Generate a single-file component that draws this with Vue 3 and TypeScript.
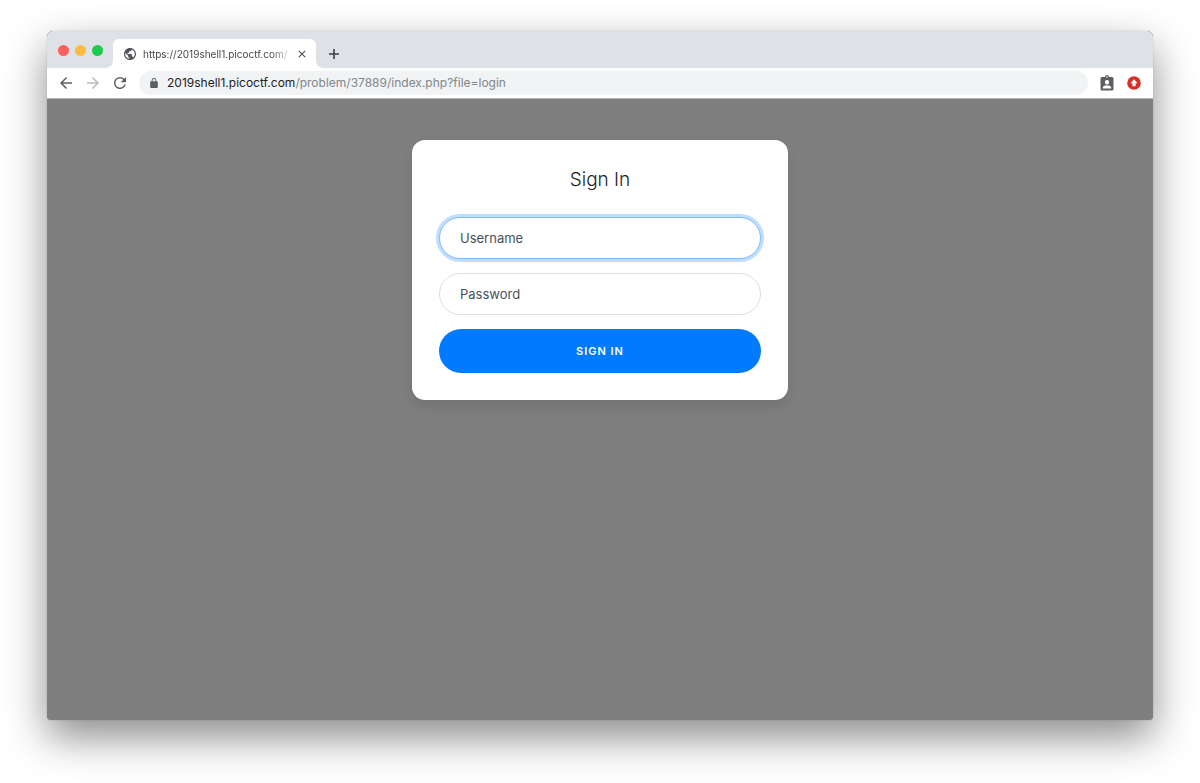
<script setup lang="ts">
import { ref } from 'vue'

type Field = { id: string; label: string; type: string; active: boolean }

const host = '2019shell1.picoctf.com'
const path = '/problem/37889/index.php?file=login'
const lights: string[] = ['close', 'minimize', 'maximize']
const fields: Field[] = [
  { id: 'username', label: 'Username', type: 'text', active: true },
  { id: 'password', label: 'Password', type: 'password', active: false },
]
const values = ref<Record<string, string>>({ username: '', password: '' })
</script>

<template>
  <div class="desktop">
    <div class="window">
      <header class="tabstrip">
        <div class="lights">
          <button v-for="l in lights" :key="l" class="light" :class="l" :aria-label="l"></button>
        </div>
        <div class="tab">
          <svg class="globe" viewBox="2 2 20 20" aria-hidden="true">
            <path d="M12 2C6.480 2 2 6.480 2 12s4.480 10 10 10 10-4.480 10-10S17.520 2 12 2zm-1 17.930c-3.950-.49-7-3.850-7-7.930 0-.62.08-1.210.21-1.790L9 15v1c0 1.100.9 2 2 2v1.930zm6.900-2.540c-.26-.81-1-1.390-1.900-1.390h-1v-3c0-.55-.45-1-1-1H8v-2h2c.55 0 1-.45 1-1V7h2c1.100 0 2-.9 2-2v-.41c2.930 1.190 5 4.060 5 7.410 0 2.080-.8 3.970-2.100 5.390z" fill="#50555b" />
          </svg>
          <span class="tab-title">https://{{ host }}/</span>
          <button class="tab-close" aria-label="Close tab">
            <svg viewBox="0 0 8 8"><path d="M.8.8l6.400 6.400M7.200.8L.8 7.200" /></svg>
          </button>
        </div>
        <button class="new-tab" aria-label="New tab">
          <svg viewBox="0 0 12 12"><path d="M6 1v10M1 6h10" /></svg>
        </button>
      </header>

      <nav class="toolbar">
        <button class="nav-btn" aria-label="Back">
          <svg viewBox="4 4 16 16"><path d="M20 11H7.830l5.590-5.590L12 4l-8 8 8 8 1.410-1.410L7.830 13H20z" fill="#5b5f64" /></svg>
        </button>
        <button class="nav-btn" aria-label="Forward">
          <svg viewBox="4 4 16 16"><path d="M12 4l-1.410 1.410L16.170 11H4v2h12.170l-5.580 5.590L12 20l8-8z" fill="#b9bbbe" /></svg>
        </button>
        <button class="nav-btn reload" aria-label="Reload">
          <svg viewBox="4 4 16 16"><path d="M17.650 6.350A7.960 7.960 0 0 0 12 4a8 8 0 1 0 7.730 10h-2.080A6 6 0 1 1 12 6c1.660 0 3.140.69 4.220 1.780L13 11h7V4z" fill="#5b5f64" /></svg>
        </button>
        <a class="omnibox" href="#">
          <svg class="lock" viewBox="4 1 16 21" aria-hidden="true">
            <path d="M18 8h-1V6A5 5 0 0 0 7 6v2H6a2 2 0 0 0-2 2v10a2 2 0 0 0 2 2h12a2 2 0 0 0 2-2V10a2 2 0 0 0-2-2zM8.900 8V6a3.100 3.100 0 0 1 6.200 0v2z" fill="#5b5f64" />
          </svg>
          <span class="url"><span class="host">{{ host }}</span>{{ path }}</span>
        </a>
        <button class="ext" aria-label="Profile badge">
          <svg class="badge" viewBox="0 0 14 16">
            <path fill-rule="evenodd" d="M2 2h3a2 2 0 0 1 4 0h3a1.500 1.500 0 0 1 1.500 1.500v10.500a1.500 1.500 0 0 1-1.500 1.500H2A1.500 1.500 0 0 1 .5 14V3.500A1.500 1.500 0 0 1 2 2zM7 1.200a.8.8 0 1 0 0 1.600.8.8 0 0 0 0-1.600zM7 5a2.200 2.200 0 1 0 0 4.400A2.200 2.200 0 0 0 7 5zM2.800 13.500h8.400v-1c0-1.400-2.800-2.200-4.200-2.200s-4.200.8-4.200 2.200z" fill="#5b5f64" />
          </svg>
        </button>
        <button class="ext" aria-label="Update">
          <svg class="update" viewBox="0 0 14 14">
            <circle cx="7" cy="7" r="6.800" fill="#d93025" />
            <path d="M7 3.300l3.500 3.900H8.600v3H5.400v-3H3.500z" fill="#fff" />
          </svg>
        </button>
      </nav>

      <main class="page">
        <form class="card" @submit.prevent>
          <h1 class="title">Sign In</h1>
          <div v-for="f in fields" :key="f.id" class="group">
            <input :id="f.id" v-model="values[f.id]" class="field" :class="{ active: f.active }" :type="f.type" />
            <label v-show="!values[f.id]" :for="f.id">{{ f.label }}</label>
          </div>
          <button class="submit" type="submit">Sign in</button>
        </form>
      </main>
    </div>
  </div>
</template>

<style>
body {
  background: #fff;
}
</style>

<style scoped>
.desktop {
  box-sizing: border-box;
  min-height: 100vh;
  padding: 31px 47px 63px;
  display: flex;
  overflow: hidden;
  font-family: Inter, "Liberation Sans", sans-serif;
}
button {
  border: 0;
  padding: 0;
  background: none;
  font-family: inherit;
}
svg {
  display: block;
}
.window {
  flex: 1;
  min-width: 0;
  display: flex;
  flex-direction: column;
  border-radius: 6px 6px 4px 4px;
  background: #7f7f7f;
  box-shadow: 0 0 1px rgba(0, 0, 0, 0.4), 0 17px 42px rgba(0, 0, 0, 0.46);
}
.tabstrip {
  height: 37px;
  display: flex;
  align-items: flex-end;
  background: #dee1e6;
  border-radius: 6px 6px 0 0;
}
.lights {
  display: flex;
  gap: 6px;
  padding: 0 10px 12px 11px;
}
.light {
  width: 11px;
  height: 11px;
  border-radius: 50%;
}
.close {
  background: #fc605c;
}
.minimize {
  background: #fdbc40;
}
.maximize {
  background: #1fca4f;
}
.tab {
  position: relative;
  box-sizing: border-box;
  width: 203px;
  height: 29px;
  padding: 0 10px 0 11px;
  display: flex;
  align-items: center;
  background: #fff;
  border-radius: 6px 6px 0 0;
}
.tab::before,
.tab::after {
  content: "";
  position: absolute;
  bottom: 0;
  width: 6px;
  height: 6px;
}
.tab::before {
  left: -6px;
  background: radial-gradient(circle at 0 0, transparent 5px, #fff 6px);
}
.tab::after {
  right: -6px;
  background: radial-gradient(circle at 100% 0, transparent 5px, #fff 6px);
}
.globe {
  width: 12px;
  height: 12px;
  margin-right: 7px;
  flex: none;
}
.tab-title {
  flex: 1;
  min-width: 0;
  white-space: nowrap;
  font-size: 10px;
  line-height: 16px;
  color: #45494d;
  mask-image: linear-gradient(to right, #000 128px, transparent 150px);
}
.tab-close {
  margin-left: 4px;
  flex: none;
}
.tab-close svg {
  width: 8px;
  height: 8px;
  fill: none;
  stroke: #50555b;
  stroke-width: 1.2;
}
.new-tab {
  margin: 0 0 8px 12px;
}
.new-tab svg {
  width: 12px;
  height: 12px;
  fill: none;
  stroke: #3c4043;
  stroke-width: 1.6;
}
.toolbar {
  height: 31px;
  box-sizing: border-box;
  display: flex;
  align-items: center;
  padding: 0 12px 0 13px;
  background: #fff;
  border-bottom: 1px solid #b5b5b5;
}
.nav-btn {
  width: 12px;
  margin-right: 15px;
  flex: none;
}
.nav-btn svg {
  width: 12px;
  height: 12px;
}
.reload {
  margin-right: 13px;
}
.omnibox {
  flex: 1;
  min-width: 0;
  height: 24px;
  margin-right: 12px;
  padding-left: 11px;
  display: flex;
  align-items: center;
  gap: 9px;
  background: #f1f3f4;
  border-radius: 12px;
  text-decoration: none;
}
.lock {
  width: 8px;
  height: 10px;
}
.url {
  font-size: 12px;
  line-height: 16px;
  color: #80868b;
  white-space: nowrap;
}
.host {
  color: #202124;
}
.ext {
  width: 14px;
  margin-right: 13px;
  flex: none;
}
.ext:last-child {
  margin-right: 0;
}
.badge {
  width: 14px;
  height: 16px;
}
.update {
  width: 14px;
  height: 14px;
}
.page {
  flex: 1;
  padding: 41px 20px;
}
.card {
  box-sizing: border-box;
  max-width: 376px;
  margin: 0 auto;
  padding: 27px;
  background: #fff;
  border-radius: 13px;
  box-shadow: 0 7px 14px rgba(0, 0, 0, 0.1);
}
.title {
  margin: 0 0 25px;
  font-size: 19px;
  line-height: 25px;
  font-weight: 300;
  text-align: center;
  color: #212529;
}
.group {
  position: relative;
  margin-bottom: 14px;
}
.field {
  display: block;
  box-sizing: border-box;
  width: 100%;
  height: 42px;
  padding: 0 20px;
  border: 1px solid #dbdfe3;
  border-radius: 21px;
  outline: 0;
  background: #fff;
  font-family: inherit;
  font-size: 13px;
  color: #495057;
}
.field.active,
.field:focus {
  border-color: #80bdff;
  box-shadow: 0 0 0 3px rgba(0, 123, 255, 0.25);
}
.group label {
  position: absolute;
  inset: 0 21px;
  line-height: 42px;
  font-size: 13px;
  color: #495057;
  pointer-events: none;
}
.submit {
  display: block;
  width: 100%;
  height: 44px;
  border-radius: 22px;
  background: #007bff;
  color: #fff;
  font-size: 11px;
  font-weight: 600;
  letter-spacing: 1px;
  text-transform: uppercase;
}
</style>
